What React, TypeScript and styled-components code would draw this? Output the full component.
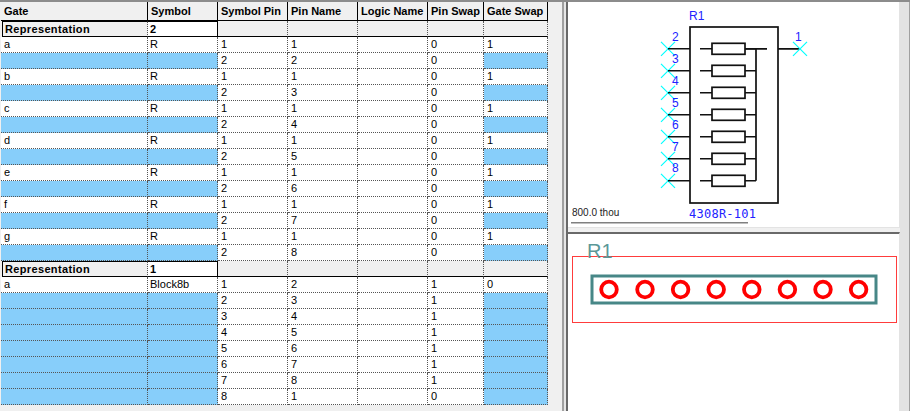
import React from "react";
import styled, { createGlobalStyle } from "styled-components";

const Global = createGlobalStyle`
  html, body { margin: 0; padding: 0; background: #f0f0f0; overflow: hidden; }
  body { font-family: "Liberation Sans", Arial, sans-serif; }
`;

const Window = styled.div`
  width: 910px;
  height: 411px;
  box-sizing: border-box;
  border-top: 2px solid #8c8c8c;
  display: flex;
  background: #f0f0f0;
  overflow: hidden;
`;

const TablePane = styled.div`
  width: 564px;
  flex: none;
  box-sizing: border-box;
  padding-left: 1px;
  border-right: 2px solid #a0a0a0;
`;

const Grid = styled.div`
  display: grid;
  grid-template-columns: 147px 70px 70px 70px 70px 56px 64px;
  width: 547px;
  font-size: 11px;
  color: #000;
`;

const HeadCell = styled.div`
  height: 18px;
  line-height: 19px;
  padding-left: 3px;
  background: #f0f0f0;
  font-weight: 700;
  white-space: nowrap;
  overflow: hidden;
  border-right: 1px solid #000;
  border-bottom: 1px solid #000;
`;

const RepCell = styled.div<{ $kind: "gate" | "symbol" | "rest" }>`
  height: ${(p) => (p.$kind === "rest" ? "15px" : "14px")};
  line-height: 14px;
  font-weight: 700;
  letter-spacing: 0.35px;
  white-space: nowrap;
  border-bottom: 1px solid #000;
  background: ${(p) => (p.$kind === "symbol" ? "#fff" : "#f0f0f0")};
  border-right: ${(p) => (p.$kind === "symbol" ? "1px solid #000" : "1px dotted #555")};
  ${(p) => (p.$kind === "rest" ? "" : "border-top: 1px solid #000; padding-left: 2px;")}
  ${(p) => (p.$kind === "gate" ? "margin-left: 1px; border-left: 1px solid #000;" : "")}
`;

const Cell = styled.div<{ $blue?: boolean; $tight?: boolean }>`
  height: 15px;
  line-height: 15px;
  padding-left: ${(p) => (p.$tight ? "2px" : "3px")};
  white-space: nowrap;
  background: ${(p) => (p.$blue ? "#87cefa" : "#fff")};
  border-right: 1px dotted #555;
  border-bottom: 1px dotted #555;
`;

const Side = styled.div`
  flex: 1;
  display: flex;
`;

const Gutter = styled.div`
  width: 2px;
  flex: none;
  background: #e6e6e6;
`;

const Panes = styled.div`
  width: 334px;
  flex: none;
  display: flex;
  flex-direction: column;
  gap: 4px;
  border-left: 2px solid #696969;
  box-sizing: border-box;
`;

const SchematicPane = styled.div`
  height: 226px;
  flex: none;
  box-sizing: border-box;
  background: #fff;
  border-right: 1px solid #e3e3e3;
  border-bottom: 1px solid #e3e3e3;
`;

const BoardPane = styled.div`
  flex: 1;
  background: #fff;
  border-top: 2px solid #696969;
  border-right: 1px solid #e3e3e3;
`;

const Canvas = styled.svg`
  display: block;
`;

const ScrollEdge = styled.div`
  flex: 1;
  background: #e3e3e3;
  border-right: 1px solid #a0a0a0;
`;

const COLS = ["Gate", "Symbol", "Symbol Pin", "Pin Name", "Logic Name", "Pin Swap", "Gate Swap"];

type Row = { gate?: string; sym?: string; pin: number; name: number; swap: number; gs?: number };

const repA: Row[] = ["a", "b", "c", "d", "e", "f", "g"].flatMap((g, i) => [
  { gate: g, sym: "R", pin: 1, name: 1, swap: 0, gs: 1 },
  { pin: 2, name: i + 2, swap: 0 },
]);

const repB: Row[] = [
  { gate: "a", sym: "Block8b", pin: 1, name: 2, swap: 1, gs: 0 },
  { pin: 2, name: 3, swap: 1 },
  { pin: 3, name: 4, swap: 1 },
  { pin: 4, name: 5, swap: 1 },
  { pin: 5, name: 6, swap: 1 },
  { pin: 6, name: 7, swap: 1 },
  { pin: 7, name: 8, swap: 1 },
  { pin: 8, name: 1, swap: 0 },
];

const Rows = ({ rows }: { rows: Row[] }) => (
  <>
    {rows.map((r, i) => {
      const blue = r.gate === undefined;
      return (
        <React.Fragment key={i}>
          <Cell $blue={blue}>{r.gate}</Cell>
          <Cell $blue={blue} $tight>{r.sym}</Cell>
          <Cell>{r.pin}</Cell>
          <Cell>{r.name}</Cell>
          <Cell />
          <Cell>{r.swap}</Cell>
          <Cell $blue={blue}>{r.gs}</Cell>
        </React.Fragment>
      );
    })}
  </>
);

const RepRow = ({ n }: { n: number }) => (
  <>
    <RepCell $kind="gate">Representation</RepCell>
    <RepCell $kind="symbol">{n}</RepCell>
    {[0, 1, 2, 3, 4].map((i) => (
      <RepCell key={i} $kind="rest" />
    ))}
  </>
);

const PIN_Y = [48.8, 70.8, 92.8, 114.8, 136.8, 158.8, 180.8];
const NUM_Y = [41, 63, 84.5, 107, 129, 151, 172];
const PAD_X = [609, 645, 680.6, 716.2, 751.8, 787.4, 823, 858.6];
const BLUE = "#2222ff";
const INK = "#111";
const TEAL = "#478787";

const Cross = ({ x, y }: { x: number; y: number }) => (
  <path d={`M${x - 7} ${y - 7}L${x + 7} ${y + 7}M${x - 7} ${y + 7}L${x + 7} ${y - 7}`} stroke="#00ffff" strokeWidth={1.2} fill="none" />
);

const Schematic = () => (
  <Canvas width={331} height={225} viewBox="568 2 331 225">
    <rect x={690} y={27} width={88} height={176} fill="none" stroke={INK} strokeWidth={1.7} />
    <path d={`M756 48.8V180.8M778 48.8H800M745 48.8H767`} stroke={INK} strokeWidth={1.7} fill="none" />
    {PIN_Y.map((y, i) => (
      <g key={y}>
        <Cross x={668} y={y} />
        <path d={`M668 ${y}H690M700 ${y}H712M745 ${y}H756`} stroke={INK} strokeWidth={1.6} fill="none" />
        <rect x={712} y={y - 5.5} width={33} height={11} fill="#fff" stroke={INK} strokeWidth={1.7} />
        <text x={672} y={NUM_Y[i]} fontSize={12} fill={BLUE} fontFamily="Liberation Sans, sans-serif">
          {i + 2}
        </text>
      </g>
    ))}
    <Cross x={800} y={48.8} />
    <text x={795} y={41} fontSize={12} fill={BLUE} fontFamily="Liberation Sans, sans-serif">1</text>
    <text x={689} y={20} fontSize={12} fill={BLUE} fontFamily="Liberation Sans, sans-serif">R1</text>
    <text x={689} y={218} fontSize={12} letterSpacing={0.25} fill={BLUE} fontFamily="DejaVu Sans Mono, monospace">4308R-101</text>
    <text x={572} y={216} fontSize={10} fill="#222" fontFamily="Liberation Sans, sans-serif">800.0 thou</text>
    <rect x={571} y={222} width={177} height={1.5} fill="#808080" />
  </Canvas>
);

const Board = () => (
  <Canvas width={331} height={175} viewBox="568 234 331 175">
    <rect x={572.5} y={256.5} width={324} height={66} fill="none" stroke="#ff3c3c" strokeWidth={1} />
    <rect x={592} y={276} width={284} height={27} fill="none" stroke={TEAL} strokeWidth={3} />
    {PAD_X.map((x) => (
      <circle key={x} cx={x} cy={289.5} r={7.8} fill="#fff" stroke="#ff0000" strokeWidth={3.8} />
    ))}
    <text x={587} y={258} fontSize={20} fill="#5b9898" fontFamily="Liberation Sans, sans-serif">R1</text>
  </Canvas>
);

export default function App() {
  return (
    <Window>
      <Global />
      <TablePane>
        <Grid>
          {COLS.map((c) => (
            <HeadCell key={c}>{c}</HeadCell>
          ))}
          <RepRow n={2} />
          <Rows rows={repA} />
          <RepRow n={1} />
          <Rows rows={repB} />
        </Grid>
      </TablePane>
      <Side>
        <Gutter />
        <Panes>
          <SchematicPane>
            <Schematic />
          </SchematicPane>
          <BoardPane>
            <Board />
          </BoardPane>
        </Panes>
        <ScrollEdge />
      </Side>
    </Window>
  );
}
